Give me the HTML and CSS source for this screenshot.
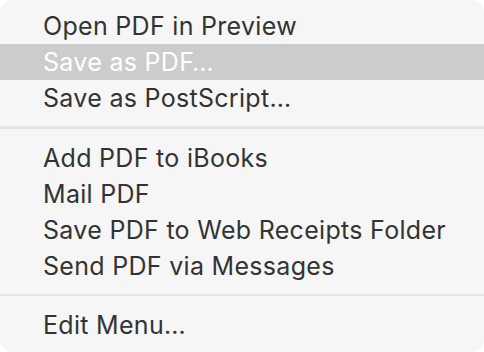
FILE: index.html
```html
<!DOCTYPE html>
<html lang="en">
<head>
    <meta charset="UTF-8">
    <meta name="viewport" content="width=device-width, initial-scale=1.0">
    <title>PDF Menu</title>
    <link rel="stylesheet" href="styles.css">
</head>
<body>
    <div class="menu">
        <div class="menu-item">Open PDF in Preview</div>
        <div class="menu-item selected">Save as PDF…</div>
        <div class="menu-item">Save as PostScript…</div>
        <div class="separator"></div>
        <div class="menu-item">Add PDF to iBooks</div>
        <div class="menu-item">Mail PDF</div>
        <div class="menu-item">Save PDF to Web Receipts Folder</div>
        <div class="menu-item">Send PDF via Messages</div>
        <div class="separator"></div>
        <div class="menu-item">Edit Menu…</div>
    </div>
</body>
</html>
```

FILE: styles.css
```css
body {
    margin: 0;
    padding: 0;
    background-color: #fff;
    font-family: Inter, "Liberation Sans", sans-serif;
}

.menu {
    width: 484px;
    height: 352px;
    box-sizing: border-box;
    padding: 8px 0 9px;
    background-color: #f6f6f6;
    border-radius: 13px;
    display: flex;
    flex-direction: column;
}

.menu-item {
    height: 36px;
    line-height: 36px;
    padding-left: 43px;
    font-size: 25px;
    letter-spacing: 0.3px;
    color: #333;
    white-space: nowrap;
}

.menu-item.selected {
    background-color: #cccccc;
    color: #fff;
}

.separator {
    height: 3px;
    margin: 10px 0 11px;
    background-color: #e4e4e4;
}
```
